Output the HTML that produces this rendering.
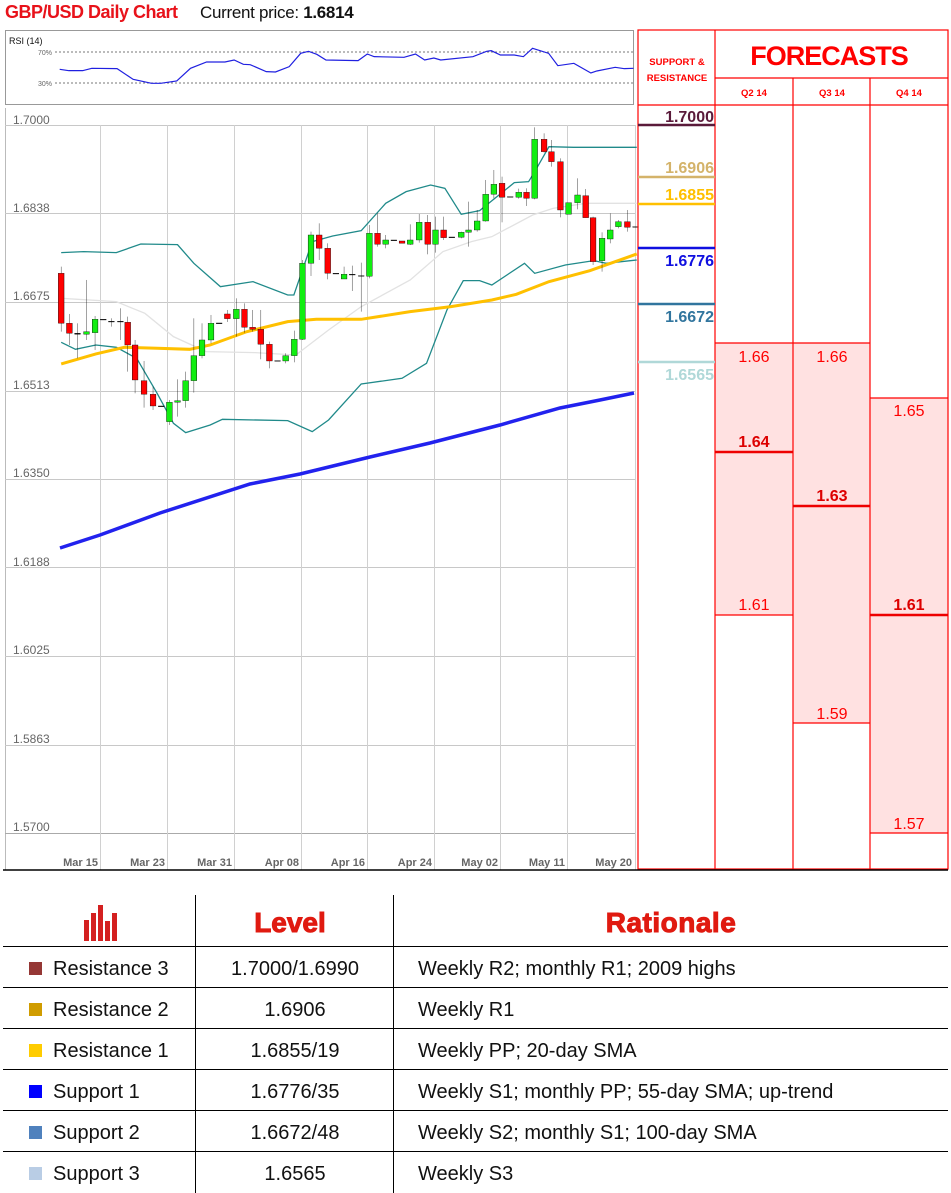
<!DOCTYPE html>
<html><head><meta charset="utf-8"><style>
*{margin:0;padding:0;box-sizing:border-box}
body{width:951px;height:1193px;background:#fff;position:relative;overflow:hidden;font-family:"Liberation Sans",sans-serif}
.a{position:absolute;white-space:nowrap}
</style></head><body>
<div class="a" style="left:5px;top:2px;font-size:18px;font-weight:bold;color:#e8121a;letter-spacing:-0.5px">GBP/USD Daily Chart</div>
<div class="a" style="left:200px;top:3px;font-size:17px;color:#111;letter-spacing:-0.3px">Current price: <b>1.6814</b></div>

<svg class="a" style="left:0;top:0" width="951" height="880" viewBox="0 0 951 880">
<rect x="5.5" y="30.5" width="628" height="74" fill="#fff" stroke="#999"/>
<text x="9" y="44" font-size="9" fill="#111" font-family="Liberation Sans">RSI (14)</text>
<line x1="55" y1="52" x2="633" y2="52" stroke="#777" stroke-dasharray="2,2"/>
<line x1="55" y1="83" x2="633" y2="83" stroke="#777" stroke-dasharray="2,2"/>
<text x="38" y="55" font-size="7" fill="#666">70%</text>
<text x="38" y="86" font-size="7" fill="#666">30%</text>
<g transform="scale(0.4591,0.3333)"><polyline fill="none" stroke="#2020e0" stroke-width="1.2" vector-effect="non-scaling-stroke" points="130,208 150,212 180,212 200,205 255,206 290,238 330,250 350,250 385,243 415,205 450,186 490,186 510,180 530,193 545,194 580,215 600,216 630,200 655,160 672,154 690,163 710,180 780,182 800,162 815,170 880,172 905,162 925,180 945,174 960,180 1030,170 1060,154 1070,152 1090,165 1120,165 1140,170 1160,145 1195,160 1215,197 1250,190 1287,219 1300,213 1340,202 1360,206 1380,205"/></g>

<line x1="5.5" y1="108" x2="5.5" y2="870" stroke="#bbb"/>
<g stroke="#c8c8c8" stroke-width="1">
<line x1="5" y1="125.5" x2="635" y2="125.5"/><line x1="5" y1="213.5" x2="635" y2="213.5"/>
<line x1="5" y1="302.5" x2="635" y2="302.5"/><line x1="5" y1="391.5" x2="635" y2="391.5"/>
<line x1="5" y1="479.5" x2="635" y2="479.5"/><line x1="5" y1="567.5" x2="635" y2="567.5"/>
<line x1="5" y1="656.5" x2="635" y2="656.5"/><line x1="5" y1="745.5" x2="635" y2="745.5"/>
<line x1="5" y1="833.5" x2="635" y2="833.5" stroke="#aaa"/>
</g>
<g stroke="#d0d0d0">
<line x1="100.5" y1="125" x2="100.5" y2="870"/><line x1="167.5" y1="125" x2="167.5" y2="870"/>
<line x1="234.5" y1="125" x2="234.5" y2="870"/><line x1="301.5" y1="125" x2="301.5" y2="870"/>
<line x1="367.5" y1="125" x2="367.5" y2="870"/><line x1="434.5" y1="125" x2="434.5" y2="870"/>
<line x1="500.5" y1="125" x2="500.5" y2="870"/><line x1="567.5" y1="125" x2="567.5" y2="870"/>
<line x1="635.5" y1="125" x2="635.5" y2="870"/>
</g>
<g font-size="12" fill="#666" font-family="Liberation Sans">
<text x="13" y="124">1.7000</text><text x="13" y="212">1.6838</text><text x="13" y="300">1.6675</text>
<text x="13" y="389">1.6513</text><text x="13" y="477">1.6350</text><text x="13" y="566">1.6188</text>
<text x="13" y="654">1.6025</text><text x="13" y="743">1.5863</text><text x="13" y="831">1.5700</text>
</g>
<g font-size="11" fill="#666" font-family="Liberation Sans" font-weight="bold" text-anchor="end">
<text x="98" y="866">Mar 15</text><text x="165" y="866">Mar 23</text><text x="232" y="866">Mar 31</text>
<text x="299" y="866">Apr 08</text><text x="365" y="866">Apr 16</text><text x="432" y="866">Apr 24</text>
<text x="498" y="866">May 02</text><text x="565" y="866">May 11</text><text x="632" y="866">May 20</text>
</g>

<polyline fill="none" stroke="#2222ee" stroke-width="3.5" points="60,548 100,535 160,513 250,484 300,474 370,457 430,443 500,425 560,408 600,400 634,393"/>
<g transform="translate(2,110) scale(0.4082,0.3333)">
<polyline fill="none" stroke="#e2e2e2" stroke-width="1.3" vector-effect="non-scaling-stroke" points="145,565 280,575 350,610 420,680 500,725 620,728 720,735 800,660 880,590 1000,510 1080,425 1150,395 1200,380 1300,315 1350,295 1430,280 1555,280"/>
<polyline fill="none" stroke="#208a8a" stroke-width="1.3" vector-effect="non-scaling-stroke" points="145,428 200,425 280,428 340,402 430,404 470,460 535,530 615,515 700,555 715,555 760,395 810,378 880,362 940,280 990,245 1050,225 1085,235 1125,313 1170,302 1255,218 1290,215 1305,185 1340,110 1400,112 1555,112"/>
<polyline fill="none" stroke="#208a8a" stroke-width="1.3" vector-effect="non-scaling-stroke" points="145,697 180,718 230,705 280,712 330,745 380,850 420,940 450,968 510,945 540,928 700,932 760,965 800,930 880,822 980,805 1040,760 1090,600 1130,512 1170,512 1200,525 1280,460 1305,490 1380,465 1450,452 1480,460 1555,450"/>
<polyline fill="none" stroke="#ffc000" stroke-width="3" vector-effect="non-scaling-stroke" points="145,762 230,732 300,712 380,715 460,718 510,705 600,665 700,635 770,628 880,628 1000,605 1100,590 1200,570 1260,553 1340,515 1440,482 1555,432"/>
<g stroke="#000" stroke-width="1" vector-effect="non-scaling-stroke">
<line x1="145" y1="470" x2="145" y2="665"/><rect x="138" y="490" width="14" height="150" fill="#f00"/>
<line x1="165" y1="612" x2="165" y2="705"/><rect x="158" y="640" width="14" height="30" fill="#f00"/>
<line x1="185" y1="640" x2="185" y2="745"/><rect x="178" y="670" width="14" height="3" fill="#000"/>
<line x1="207" y1="510" x2="207" y2="690"/><rect x="200" y="665" width="14" height="8" fill="#1e1"/>
<line x1="228" y1="618" x2="228" y2="720"/><rect x="221" y="628" width="14" height="40" fill="#1e1"/>
<rect x="241" y="628" width="14" height="2" fill="#000"/>
<line x1="268" y1="625" x2="268" y2="650"/><rect x="261" y="634" width="14" height="2" fill="#000"/>
<line x1="290" y1="595" x2="290" y2="690"/><rect x="283" y="634" width="14" height="2" fill="#000"/>
<line x1="308" y1="620" x2="308" y2="785"/><rect x="301" y="637" width="14" height="68" fill="#f00"/>
<line x1="326" y1="690" x2="326" y2="850"/><rect x="319" y="705" width="14" height="105" fill="#f00"/>
<line x1="348" y1="753" x2="348" y2="893"/><rect x="341" y="812" width="14" height="41" fill="#f00"/>
<line x1="370" y1="830" x2="370" y2="900"/><rect x="363" y="853" width="14" height="35" fill="#f00"/>
<rect x="383" y="888" width="14" height="2" fill="#000"/>
<line x1="410" y1="870" x2="410" y2="945"/><rect x="403" y="877" width="14" height="58" fill="#1e1"/>
<line x1="430" y1="808" x2="430" y2="920"/><rect x="423" y="872" width="14" height="5" fill="#1e1"/>
<line x1="450" y1="785" x2="450" y2="893"/><rect x="443" y="812" width="14" height="60" fill="#1e1"/>
<line x1="470" y1="625" x2="470" y2="848"/><rect x="463" y="737" width="14" height="75" fill="#1e1"/>
<line x1="490" y1="640" x2="490" y2="745"/><rect x="483" y="690" width="14" height="47" fill="#1e1"/>
<line x1="512" y1="615" x2="512" y2="700"/><rect x="505" y="640" width="14" height="50" fill="#1e1"/>
<rect x="525" y="639" width="14" height="2" fill="#000"/>
<line x1="552" y1="600" x2="552" y2="636"/><rect x="545" y="612" width="14" height="14" fill="#f00"/>
<line x1="574" y1="565" x2="574" y2="680"/><rect x="567" y="598" width="14" height="28" fill="#1e1"/>
<line x1="594" y1="580" x2="594" y2="668"/><rect x="587" y="598" width="14" height="54" fill="#f00"/>
<line x1="614" y1="600" x2="614" y2="665"/><rect x="607" y="652" width="14" height="6" fill="#f00"/>
<line x1="634" y1="600" x2="634" y2="748"/><rect x="627" y="658" width="14" height="45" fill="#f00"/>
<line x1="655" y1="695" x2="655" y2="775"/><rect x="648" y="703" width="14" height="50" fill="#f00"/>
<rect x="668" y="752" width="14" height="2" fill="#000"/>
<line x1="695" y1="730" x2="695" y2="760"/><rect x="688" y="737" width="14" height="16" fill="#1e1"/>
<line x1="716" y1="662" x2="716" y2="757"/><rect x="709" y="688" width="14" height="49" fill="#1e1"/>
<line x1="736" y1="450" x2="736" y2="690"/><rect x="729" y="460" width="14" height="228" fill="#1e1"/>
<line x1="757" y1="365" x2="757" y2="498"/><rect x="750" y="375" width="14" height="85" fill="#1e1"/>
<line x1="777" y1="340" x2="777" y2="450"/><rect x="770" y="375" width="14" height="40" fill="#f00"/>
<line x1="798" y1="400" x2="798" y2="508"/><rect x="791" y="415" width="14" height="75" fill="#f00"/>
<rect x="811" y="490" width="14" height="2" fill="#000"/>
<line x1="838" y1="470" x2="838" y2="507"/><rect x="831" y="493" width="14" height="14" fill="#1e1"/>
<line x1="858" y1="467" x2="858" y2="543"/><rect x="851" y="493" width="14" height="2" fill="#000"/>
<line x1="880" y1="458" x2="880" y2="605"/><rect x="873" y="497" width="14" height="2" fill="#000"/>
<line x1="900" y1="345" x2="900" y2="505"/><rect x="893" y="370" width="14" height="129" fill="#1e1"/>
<line x1="920" y1="310" x2="920" y2="410"/><rect x="913" y="370" width="14" height="33" fill="#f00"/>
<line x1="940" y1="375" x2="940" y2="415"/><rect x="933" y="390" width="14" height="13" fill="#1e1"/>
<rect x="953" y="390" width="14" height="2" fill="#000"/>
<rect x="973" y="393" width="14" height="7" fill="#f00"/>
<line x1="1000" y1="343" x2="1000" y2="405"/><rect x="993" y="390" width="14" height="13" fill="#1e1"/>
<line x1="1022" y1="312" x2="1022" y2="398"/><rect x="1015" y="337" width="14" height="53" fill="#1e1"/>
<line x1="1043" y1="315" x2="1043" y2="433"/><rect x="1036" y="337" width="14" height="66" fill="#f00"/>
<line x1="1062" y1="320" x2="1062" y2="428"/><rect x="1055" y="360" width="14" height="43" fill="#1e1"/>
<line x1="1082" y1="320" x2="1082" y2="390"/><rect x="1075" y="360" width="14" height="23" fill="#f00"/>
<rect x="1095" y="381" width="14" height="2" fill="#000"/>
<line x1="1125" y1="365" x2="1125" y2="385"/><rect x="1118" y="367" width="14" height="15" fill="#1e1"/>
<line x1="1143" y1="275" x2="1143" y2="410"/><rect x="1136" y="360" width="14" height="7" fill="#1e1"/>
<line x1="1164" y1="300" x2="1164" y2="365"/><rect x="1157" y="333" width="14" height="27" fill="#1e1"/>
<line x1="1185" y1="210" x2="1185" y2="335"/><rect x="1178" y="253" width="14" height="80" fill="#1e1"/>
<line x1="1205" y1="180" x2="1205" y2="265"/><rect x="1198" y="223" width="14" height="30" fill="#1e1"/>
<line x1="1225" y1="200" x2="1225" y2="337"/><rect x="1218" y="220" width="14" height="42" fill="#f00"/>
<rect x="1238" y="260" width="14" height="2" fill="#000"/>
<line x1="1266" y1="236" x2="1266" y2="266"/><rect x="1259" y="247" width="14" height="15" fill="#1e1"/>
<line x1="1285" y1="235" x2="1285" y2="288"/><rect x="1278" y="247" width="14" height="18" fill="#f00"/>
<line x1="1305" y1="52" x2="1305" y2="268"/><rect x="1298" y="88" width="14" height="177" fill="#1e1"/>
<line x1="1328" y1="70" x2="1328" y2="128"/><rect x="1321" y="88" width="14" height="37" fill="#f00"/>
<line x1="1346" y1="90" x2="1346" y2="170"/><rect x="1339" y="125" width="14" height="30" fill="#f00"/>
<line x1="1368" y1="145" x2="1368" y2="322"/><rect x="1361" y="155" width="14" height="145" fill="#f00"/>
<rect x="1381" y="278" width="14" height="35" fill="#1e1"/>
<line x1="1410" y1="205" x2="1410" y2="298"/><rect x="1403" y="255" width="14" height="23" fill="#1e1"/>
<line x1="1430" y1="237" x2="1430" y2="323"/><rect x="1423" y="257" width="14" height="66" fill="#f00"/>
<line x1="1448" y1="320" x2="1448" y2="465"/><rect x="1441" y="323" width="14" height="132" fill="#f00"/>
<line x1="1470" y1="367" x2="1470" y2="485"/><rect x="1463" y="385" width="14" height="67" fill="#1e1"/>
<line x1="1490" y1="310" x2="1490" y2="400"/><rect x="1483" y="360" width="14" height="27" fill="#1e1"/>
<line x1="1510" y1="330" x2="1510" y2="355"/><rect x="1503" y="335" width="14" height="15" fill="#1e1"/>
<line x1="1532" y1="300" x2="1532" y2="365"/><rect x="1525" y="335" width="14" height="17" fill="#f00"/>
<rect x="1545" y="350" width="14" height="2" fill="#000"/>
</g>
</g>

<rect x="715" y="343" width="78" height="272" fill="#ffe1e1"/>
<rect x="793" y="343" width="77" height="380" fill="#ffe1e1"/>
<rect x="870" y="398" width="78" height="435" fill="#ffe1e1"/>
<g stroke="#f00" stroke-width="1.2" fill="none">
<rect x="638" y="30" width="310" height="839"/>
<line x1="715" y1="30" x2="715" y2="869"/>
<line x1="793" y1="78" x2="793" y2="869"/>
<line x1="870" y1="78" x2="870" y2="869"/>
<line x1="715" y1="78" x2="948" y2="78"/>
<line x1="638" y1="105" x2="948" y2="105"/>
<line x1="715" y1="343" x2="870" y2="343"/>
<line x1="715" y1="615" x2="793" y2="615"/>
<line x1="793" y1="723" x2="870" y2="723"/>
<line x1="870" y1="398" x2="948" y2="398"/>
<line x1="870" y1="833" x2="948" y2="833"/>
</g>
<g stroke="#e00" stroke-width="2.5">
<line x1="715" y1="452" x2="793" y2="452"/><line x1="793" y1="506" x2="870" y2="506"/><line x1="870" y1="615" x2="948" y2="615"/>
</g>
<g stroke-width="2.5">
<line x1="638" y1="125" x2="715" y2="125" stroke="#5a1a3a"/>
<line x1="638" y1="177" x2="715" y2="177" stroke="#d4b36a"/>
<line x1="638" y1="204" x2="715" y2="204" stroke="#ffc000"/>
<line x1="638" y1="248" x2="715" y2="248" stroke="#1010e0"/>
<line x1="638" y1="304" x2="715" y2="304" stroke="#31759e"/>
<line x1="638" y1="362" x2="715" y2="362" stroke="#b0d8d8"/>
</g>
<g font-family="Liberation Sans" font-weight="bold" text-anchor="end" font-size="16">
<text x="714" y="122" fill="#5a1a3a">1.7000</text>
<text x="714" y="173" fill="#d4b36a">1.6906</text>
<text x="714" y="200" fill="#ffc000">1.6855</text>
<text x="714" y="266" fill="#1010e0">1.6776</text>
<text x="714" y="322" fill="#31759e">1.6672</text>
<text x="714" y="380" fill="#b0d8d8">1.6565</text>
</g>
<g font-family="Liberation Sans" font-weight="bold" fill="#f00" text-anchor="middle">
<text x="677" y="65" font-size="9.5">SUPPORT &amp;</text>
<text x="677" y="81" font-size="9.5">RESISTANCE</text>
<text x="829" y="65" font-size="27" letter-spacing="-1">FORECASTS</text>
<text x="754" y="96" font-size="9.5">Q2 14</text>
<text x="832" y="96" font-size="9.5">Q3 14</text>
<text x="909" y="96" font-size="9.5">Q4 14</text>
</g>
<g font-family="Liberation Sans" fill="#f00" text-anchor="middle" font-size="16">
<text x="754" y="362">1.66</text><text x="832" y="362">1.66</text><text x="909" y="416">1.65</text>
<text x="754" y="610">1.61</text><text x="832" y="719">1.59</text><text x="909" y="829">1.57</text>
<g font-weight="bold" fill="#d00"><text x="754" y="447">1.64</text><text x="832" y="501">1.63</text><text x="909" y="610">1.61</text></g>
</g>
<line x1="3" y1="870" x2="948" y2="870" stroke="#000" stroke-width="1.5"/>
</svg>

<svg class="a" style="left:0;top:880px" width="951" height="313">
<g stroke="#000" stroke-width="1">
<line x1="195.5" y1="15" x2="195.5" y2="313"/><line x1="393.5" y1="15" x2="393.5" y2="313"/>
<line x1="3" y1="66.5" x2="948" y2="66.5"/><line x1="3" y1="107.5" x2="948" y2="107.5"/>
<line x1="3" y1="148.5" x2="948" y2="148.5"/><line x1="3" y1="189.5" x2="948" y2="189.5"/>
<line x1="3" y1="230.5" x2="948" y2="230.5"/><line x1="3" y1="271.5" x2="948" y2="271.5"/>
</g>
<g fill="#d42020"><rect x="84" y="40" width="5" height="21"/><rect x="91" y="33" width="5" height="28"/><rect x="98" y="25" width="5" height="36"/><rect x="105" y="41" width="5" height="20"/><rect x="112" y="33" width="5" height="28"/></g>
<g font-family="Liberation Sans" font-weight="900" fill="#e01a10" font-size="28" text-anchor="middle">
<text x="290" y="52" stroke="#e01a10" stroke-width="1">Level</text>
<text x="671" y="52" stroke="#e01a10" stroke-width="1" letter-spacing="0.5">Rationale</text>
</g>
<rect x="29" y="82" width="13" height="13" fill="#953735"/>
<rect x="29" y="123" width="13" height="13" fill="#d09c00"/>
<rect x="29" y="164" width="13" height="13" fill="#ffcc00"/>
<rect x="29" y="205" width="13" height="13" fill="#0000ff"/>
<rect x="29" y="246" width="13" height="13" fill="#4f81bd"/>
<rect x="29" y="287" width="13" height="13" fill="#b9cde5"/>
<g font-family="Liberation Sans" font-size="20" fill="#111">
<text x="53" y="95">Resistance 3</text><text x="53" y="136">Resistance 2</text><text x="53" y="177">Resistance 1</text>
<text x="53" y="218">Support 1</text><text x="53" y="259">Support 2</text><text x="53" y="300">Support 3</text>
<g text-anchor="middle"><text x="295" y="95">1.7000/1.6990</text><text x="295" y="136">1.6906</text><text x="295" y="177">1.6855/19</text>
<text x="295" y="218">1.6776/35</text><text x="295" y="259">1.6672/48</text><text x="295" y="300">1.6565</text></g>
<text x="418" y="95">Weekly R2; monthly R1; 2009 highs</text><text x="418" y="136">Weekly R1</text>
<text x="418" y="177">Weekly PP; 20-day SMA</text><text x="418" y="218">Weekly S1; monthly PP; 55-day SMA; up-trend</text>
<text x="418" y="259">Weekly S2; monthly S1; 100-day SMA</text><text x="418" y="300">Weekly S3</text>
</g>
</svg>
</body></html>
